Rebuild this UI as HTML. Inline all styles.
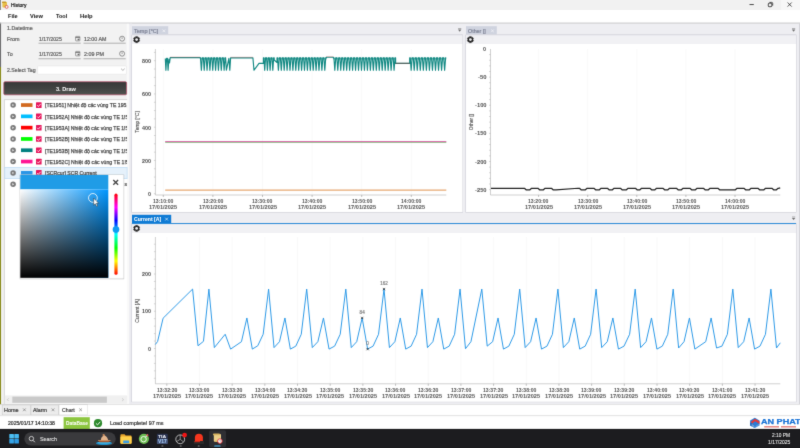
<!DOCTYPE html>
<html><head><meta charset="utf-8"><title>History</title>
<style>
*{box-sizing:border-box}
html,body{margin:0;padding:0;width:800px;height:448px;overflow:hidden;background:#fff;font-family:"Liberation Sans",sans-serif;}
#root{position:relative;width:800px;height:448px;overflow:hidden;background:#eeeef2;}
.a{position:absolute}
.t{position:absolute;white-space:nowrap;line-height:8px;height:8px;color:#333;transform-origin:0 0;-webkit-text-stroke:0.22px currentColor}
.t.v{transform:translate(-50%,-50%) rotate(-90deg);transform-origin:50% 50%}
svg{position:absolute;left:0;top:0;overflow:visible;pointer-events:none}
</style></head><body><svg width="0" height="0"><defs><filter id="soft" x="0" y="0" width="100%" height="100%" color-interpolation-filters="sRGB"><feConvolveMatrix order="3" kernelMatrix="1 8 1 8 64 8 1 8 1" divisor="100" edgeMode="duplicate" preserveAlpha="true"/></filter></defs></svg><div id="root" style="filter:url(#soft)">
<svg width="800" height="448" viewBox="0 0 800 448"><defs><linearGradient id="gb" x1="0" y1="0" x2="0" y2="1"><stop offset="0" stop-color="#383838"/><stop offset="0.5" stop-color="#414241"/><stop offset="1" stop-color="#505450"/></linearGradient><linearGradient id="gh" x1="0" y1="0" x2="1" y2="0"><stop offset="0" stop-color="#fff"/><stop offset="1" stop-color="#0096ff"/></linearGradient><linearGradient id="gv" x1="0" y1="0" x2="0" y2="1"><stop offset="0" stop-color="#000" stop-opacity="0"/><stop offset="1" stop-color="#000"/></linearGradient><linearGradient id="hue" x1="0" y1="0" x2="0" y2="1"><stop offset="0" stop-color="#f00"/><stop offset="0.17" stop-color="#f0f"/><stop offset="0.33" stop-color="#00f"/><stop offset="0.5" stop-color="#0ff"/><stop offset="0.67" stop-color="#0f0"/><stop offset="0.83" stop-color="#ff0"/><stop offset="1" stop-color="#f00"/></linearGradient></defs>
<rect x="0.00" y="0.00" width="800.00" height="448.00" fill="#eeeef2" />
<rect x="0.00" y="0.00" width="800.00" height="10.20" fill="#f1f1f1" />
<rect x="781.00" y="0.00" width="19.00" height="10.20" fill="#f7f7f7" />
<rect x="0.00" y="0.00" width="1.00" height="23.60" fill="#8e8e8e" />
<rect x="2.4" y="2" width="4.6" height="5.6" rx="0.8" fill="#e8c24a"/><rect x="2" y="1.6" width="4.2" height="1.4" rx="0.6" fill="#c99a2a"/><circle cx="6.6" cy="6.9" r="1.5" fill="#f4f4f4" stroke="#d9363e" stroke-width="0.7"/><path d="M749.5 4.55h4.3" stroke="#111" stroke-width="0.75" fill="none"/><rect x="768.3" y="3.2" width="3.5" height="3.5" rx="0.8" stroke="#111" stroke-width="0.75" fill="none"/><path d="M769.5 2.4h2.2a1.0 1.0 0 0 1 1.0 1.0v2.2" stroke="#111" stroke-width="0.7" fill="none"/><path d="M787.6 2.5l4.1 4.1m0-4.1l-4.1 4.1" stroke="#111" stroke-width="0.7" fill="none"/>
<rect x="0.00" y="10.00" width="800.00" height="12.60" fill="#ffffff" />
<rect x="0.00" y="22.60" width="800.00" height="1.00" fill="#cdcdcd" />
<rect x="0.00" y="23.60" width="1.30" height="43.40" fill="#6e6e6e" />
<rect x="0.00" y="67.00" width="1.30" height="362.00" fill="#8a8c1e" />
<rect x="1.30" y="23.60" width="0.90" height="405.00" fill="#fafafa" />
<rect x="2.20" y="23.60" width="124.40" height="381.00" fill="#f2f2f2" />
<rect x="126.60" y="23.60" width="2.80" height="381.00" fill="#f9f9f9" />
<rect x="129.40" y="23.60" width="2.60" height="381.00" fill="#ebebf0" />
<rect x="38.50" y="42.70" width="42.20" height="0.95" fill="#ababab" />
<rect x="83.50" y="42.70" width="42.20" height="0.95" fill="#ababab" />
<rect x="38.50" y="58.30" width="42.20" height="0.95" fill="#ababab" />
<rect x="83.50" y="58.30" width="42.20" height="0.95" fill="#ababab" />
<rect x="37.60" y="66.00" width="88.80" height="8.20" fill="#ffffff" stroke="#e0e0e0" stroke-width="0.5" rx="0.8"/>
<rect x="75.6" y="36.40" width="4.3" height="4.5" rx="0.5" fill="none" stroke="#666" stroke-width="0.6"/><path d="M75.6 37.50h4.3" stroke="#666" stroke-width="0.8"/><rect x="77.6" y="38.70" width="1.7" height="1.6" fill="#666"/><circle cx="122.1" cy="38.70" r="2.5" fill="none" stroke="#5e5e5e" stroke-width="0.65"/><path d="M122.1 37.30v1.7" stroke="#5e5e5e" stroke-width="0.6" fill="none"/>
<rect x="75.6" y="51.40" width="4.3" height="4.5" rx="0.5" fill="none" stroke="#666" stroke-width="0.6"/><path d="M75.6 52.50h4.3" stroke="#666" stroke-width="0.8"/><rect x="77.6" y="53.70" width="1.7" height="1.6" fill="#666"/><circle cx="122.1" cy="53.70" r="2.5" fill="none" stroke="#5e5e5e" stroke-width="0.65"/><path d="M122.1 52.30v1.7" stroke="#5e5e5e" stroke-width="0.6" fill="none"/>
<path d="M121.1 68.7l1.8 1.7l1.8-1.7" stroke="#777" stroke-width="0.6" fill="none"/>
<rect x="3.80" y="81.70" width="122.80" height="13.10" fill="url(#gb)" stroke="#b8506a" stroke-width="0.7" rx="1.2"/>
<rect x="4.20" y="99.40" width="122.90" height="304.60" fill="#ffffff" />
<path d="M4.4 404V99.6H127.1" stroke="#bdbdbd" stroke-width="0.6" fill="none"/>
<rect x="4.80" y="167.30" width="122.30" height="11.40" fill="#e5f1fb" stroke="#b5d8f3" stroke-width="0.6"/>
<circle cx="13.1" cy="105.10" r="2.75" fill="#7a7a7a"/><path d="M12.3 103.90l1.9 1.2l-1.9 1.2z" fill="#ececec"/>
<rect x="21.00" y="103.20" width="11.50" height="3.70" fill="#d2691e" />
<rect x="36.00" y="102.30" width="5.60" height="5.60" fill="#e6175c" rx="0.5"/>
<path d="M37.2 105.20l1.2 1.3l2.2-2.5" stroke="#fff" stroke-width="0.8" fill="none"/>
<circle cx="13.1" cy="116.40" r="2.75" fill="#7a7a7a"/><path d="M12.3 115.20l1.9 1.2l-1.9 1.2z" fill="#ececec"/>
<rect x="21.00" y="114.50" width="11.50" height="3.70" fill="#00bfff" />
<rect x="36.00" y="113.60" width="5.60" height="5.60" fill="#e6175c" rx="0.5"/>
<path d="M37.2 116.50l1.2 1.3l2.2-2.5" stroke="#fff" stroke-width="0.8" fill="none"/>
<circle cx="13.1" cy="127.70" r="2.75" fill="#7a7a7a"/><path d="M12.3 126.50l1.9 1.2l-1.9 1.2z" fill="#ececec"/>
<rect x="21.00" y="125.80" width="11.50" height="3.70" fill="#ff0000" />
<rect x="36.00" y="124.90" width="5.60" height="5.60" fill="#e6175c" rx="0.5"/>
<path d="M37.2 127.80l1.2 1.3l2.2-2.5" stroke="#fff" stroke-width="0.8" fill="none"/>
<circle cx="13.1" cy="139.00" r="2.75" fill="#7a7a7a"/><path d="M12.3 137.80l1.9 1.2l-1.9 1.2z" fill="#ececec"/>
<rect x="21.00" y="137.10" width="11.50" height="3.70" fill="#00ff00" />
<rect x="36.00" y="136.20" width="5.60" height="5.60" fill="#e6175c" rx="0.5"/>
<path d="M37.2 139.10l1.2 1.3l2.2-2.5" stroke="#fff" stroke-width="0.8" fill="none"/>
<circle cx="13.1" cy="150.30" r="2.75" fill="#7a7a7a"/><path d="M12.3 149.10l1.9 1.2l-1.9 1.2z" fill="#ececec"/>
<rect x="21.00" y="148.40" width="11.50" height="3.70" fill="#008080" />
<rect x="36.00" y="147.50" width="5.60" height="5.60" fill="#e6175c" rx="0.5"/>
<path d="M37.2 150.40l1.2 1.3l2.2-2.5" stroke="#fff" stroke-width="0.8" fill="none"/>
<circle cx="13.1" cy="161.60" r="2.75" fill="#7a7a7a"/><path d="M12.3 160.40l1.9 1.2l-1.9 1.2z" fill="#ececec"/>
<rect x="21.00" y="159.70" width="11.50" height="3.70" fill="#ff1493" />
<rect x="36.00" y="158.80" width="5.60" height="5.60" fill="#e6175c" rx="0.5"/>
<path d="M37.2 161.70l1.2 1.3l2.2-2.5" stroke="#fff" stroke-width="0.8" fill="none"/>
<circle cx="13.1" cy="172.90" r="2.75" fill="#7a7a7a"/><path d="M12.3 171.70l1.9 1.2l-1.9 1.2z" fill="#ececec"/>
<rect x="21.00" y="171.00" width="11.50" height="3.70" fill="#2b96e6" />
<rect x="36.00" y="170.10" width="5.60" height="5.60" fill="#e6175c" rx="0.5"/>
<path d="M37.2 173.00l1.2 1.3l2.2-2.5" stroke="#fff" stroke-width="0.8" fill="none"/>
<circle cx="13.1" cy="184.20" r="2.75" fill="#7a7a7a"/><path d="M12.3 183.00l1.9 1.2l-1.9 1.2z" fill="#ececec"/>
<rect x="4.80" y="395.40" width="122.30" height="8.40" fill="#f0f0f0" />
<rect x="12.30" y="396.60" width="94.60" height="6.20" fill="#c9c9c9" />
<path d="M8.6 398.4l-1.3 1.3l1.3 1.3M122.2 398.4l1.3 1.3l-1.3 1.3" stroke="#b0b0b0" stroke-width="0.6" fill="none"/>
<rect x="131.70" y="34.90" width="331.00" height="177.40" fill="none" stroke="#cfcfd8" stroke-width="0.6"/>
<rect x="465.70" y="34.90" width="330.50" height="177.40" fill="none" stroke="#cfcfd8" stroke-width="0.6"/>
<rect x="131.70" y="223.50" width="664.50" height="178.40" fill="none" stroke="#cfcfd8" stroke-width="0.6"/>
<rect x="132.00" y="35.20" width="330.40" height="9.10" fill="#f1f1f4" />
<rect x="132.00" y="26.20" width="36.20" height="8.30" fill="#cfd3df" />
<rect x="132.00" y="34.50" width="330.40" height="0.70" fill="#d6d6de" />
<path d="M162.60 29.50l2.6 2.6m0-2.6l-2.6 2.6" stroke="#f4f4f8" stroke-width="0.75" fill="none"/>
<rect x="132.00" y="44.00" width="330.40" height="168.00" fill="#ffffff" />
<rect x="466.00" y="35.20" width="330.00" height="9.10" fill="#f1f1f4" />
<rect x="466.00" y="26.20" width="30.80" height="8.30" fill="#cfd3df" />
<rect x="466.00" y="34.50" width="330.00" height="0.70" fill="#d6d6de" />
<path d="M491.20 29.50l2.6 2.6m0-2.6l-2.6 2.6" stroke="#f4f4f8" stroke-width="0.75" fill="none"/>
<rect x="466.00" y="44.00" width="330.00" height="168.00" fill="#ffffff" />
<rect x="132.00" y="223.80" width="664.00" height="9.10" fill="#f1f1f4" />
<rect x="132.00" y="214.80" width="39.20" height="8.70" fill="#0f7bd5" />
<rect x="132.00" y="223.05" width="664.00" height="1.00" fill="#2b8ad8" />
<path d="M165.20 217.70l2.8 2.8m0-2.8l-2.8 2.8" stroke="#fff" stroke-width="0.6" fill="none"/>
<rect x="132.00" y="233.00" width="664.00" height="168.60" fill="#ffffff" />
<path d="M135.62 36.45L137.58 36.45L137.80 37.41L137.90 37.47L138.84 37.18L139.82 38.87L139.10 39.54L139.10 39.66L139.82 40.33L138.84 42.02L137.90 41.73L137.80 41.79L137.58 42.75L135.62 42.75L135.40 41.79L135.30 41.73L134.36 42.02L133.38 40.33L134.10 39.66L134.10 39.54L133.38 38.87L134.36 37.18L135.30 37.47L135.40 37.41Z" fill="#222" stroke="#222" stroke-width="0.3" stroke-linejoin="round"/><circle cx="136.6" cy="39.6" r="1.4" fill="#f0f0f3"/>
<path d="M469.42 36.45L471.38 36.45L471.60 37.41L471.70 37.47L472.64 37.18L473.62 38.87L472.90 39.54L472.90 39.66L473.62 40.33L472.64 42.02L471.70 41.73L471.60 41.79L471.38 42.75L469.42 42.75L469.20 41.79L469.10 41.73L468.16 42.02L467.18 40.33L467.90 39.66L467.90 39.54L467.18 38.87L468.16 37.18L469.10 37.47L469.20 37.41Z" fill="#222" stroke="#222" stroke-width="0.3" stroke-linejoin="round"/><circle cx="470.4" cy="39.6" r="1.4" fill="#f0f0f3"/>
<path d="M135.62 225.25L137.58 225.25L137.80 226.21L137.90 226.27L138.84 225.98L139.82 227.67L139.10 228.34L139.10 228.46L139.82 229.13L138.84 230.82L137.90 230.53L137.80 230.59L137.58 231.55L135.62 231.55L135.40 230.59L135.30 230.53L134.36 230.82L133.38 229.13L134.10 228.46L134.10 228.34L133.38 227.67L134.36 225.98L135.30 226.27L135.40 226.21Z" fill="#222" stroke="#222" stroke-width="0.3" stroke-linejoin="round"/><circle cx="136.6" cy="228.4" r="1.4" fill="#f0f0f3"/>
<path d="M458.10 28.60h3.2" stroke="#777" stroke-width="0.6"/><path d="M458.00 29.60h3.4l-1.7 2.1z" fill="#707070"/>
<path d="M792.00 28.60h3.2" stroke="#777" stroke-width="0.6"/><path d="M791.90 29.60h3.4l-1.7 2.1z" fill="#707070"/>
<path d="M792.00 217.00h3.2" stroke="#777" stroke-width="0.6"/><path d="M791.90 218.00h3.4l-1.7 2.1z" fill="#707070"/>
<path d="M163.30 49V195.0" stroke="#ececec" stroke-width="0.32"/>
<path d="M212.90 49V195.0" stroke="#ececec" stroke-width="0.32"/>
<path d="M262.50 49V195.0" stroke="#ececec" stroke-width="0.32"/>
<path d="M312.10 49V195.0" stroke="#ececec" stroke-width="0.32"/>
<path d="M361.70 49V195.0" stroke="#ececec" stroke-width="0.32"/>
<path d="M411.30 49V195.0" stroke="#ececec" stroke-width="0.32"/>
<path d="M155.4 49V195.0H446.3" stroke="#a8a8a8" stroke-width="0.55" fill="none"/>
<path d="M153.90 193.70h1.5" stroke="#a8a8a8" stroke-width="0.45"/>
<path d="M153.90 185.39h1.5" stroke="#a8a8a8" stroke-width="0.45"/>
<path d="M153.90 177.07h1.5" stroke="#a8a8a8" stroke-width="0.45"/>
<path d="M153.90 168.76h1.5" stroke="#a8a8a8" stroke-width="0.45"/>
<path d="M153.90 160.45h1.5" stroke="#a8a8a8" stroke-width="0.45"/>
<path d="M153.90 152.14h1.5" stroke="#a8a8a8" stroke-width="0.45"/>
<path d="M153.90 143.82h1.5" stroke="#a8a8a8" stroke-width="0.45"/>
<path d="M153.90 135.51h1.5" stroke="#a8a8a8" stroke-width="0.45"/>
<path d="M153.90 127.20h1.5" stroke="#a8a8a8" stroke-width="0.45"/>
<path d="M153.90 118.89h1.5" stroke="#a8a8a8" stroke-width="0.45"/>
<path d="M153.90 110.57h1.5" stroke="#a8a8a8" stroke-width="0.45"/>
<path d="M153.90 102.26h1.5" stroke="#a8a8a8" stroke-width="0.45"/>
<path d="M153.90 93.95h1.5" stroke="#a8a8a8" stroke-width="0.45"/>
<path d="M153.90 85.64h1.5" stroke="#a8a8a8" stroke-width="0.45"/>
<path d="M153.90 77.32h1.5" stroke="#a8a8a8" stroke-width="0.45"/>
<path d="M153.90 69.01h1.5" stroke="#a8a8a8" stroke-width="0.45"/>
<path d="M153.90 60.70h1.5" stroke="#a8a8a8" stroke-width="0.45"/>
<path d="M153.90 52.39h1.5" stroke="#a8a8a8" stroke-width="0.45"/>
<path d="M163.30 195.00v2.0" stroke="#999" stroke-width="0.6"/>
<path d="M212.90 195.00v2.0" stroke="#999" stroke-width="0.6"/>
<path d="M262.50 195.00v2.0" stroke="#999" stroke-width="0.6"/>
<path d="M312.10 195.00v2.0" stroke="#999" stroke-width="0.6"/>
<path d="M361.70 195.00v2.0" stroke="#999" stroke-width="0.6"/>
<path d="M411.30 195.00v2.0" stroke="#999" stroke-width="0.6"/>
<path d="M165.2 190.1H446.3" stroke="#e6a872" stroke-width="1.3"/>
<path d="M165.2 142.3H446.3" stroke="#5fae5f" stroke-width="0.8"/>
<path d="M165.2 141.6H446.3" stroke="#d9509f" stroke-width="0.9"/>
<polyline points="165.30,58.50 165.90,70.30 166.60,58.20 167.40,58.20 168.10,70.30 168.90,59.00 169.50,63.00 170.20,57.60 170.20,57.60 200.00,57.60 200.00,57.90 200.51,57.90 201.37,70.30 202.28,57.90 202.84,57.90 203.36,57.90 204.21,70.30 205.12,57.90 205.69,57.90 206.20,57.90 207.05,70.30 207.96,57.90 208.53,57.90 209.05,57.90 209.90,70.30 210.81,57.90 211.38,57.90 211.89,57.90 212.74,70.30 213.65,57.90 214.22,57.90 214.73,57.90 215.59,70.30 216.50,57.90 217.07,57.90 217.58,57.90 218.43,70.30 219.34,57.90 219.91,57.90 220.42,57.90 221.28,70.30 222.19,57.90 222.76,57.90 223.27,57.90 224.12,70.30 225.03,57.90 225.60,57.90 226.40,70.20 228.90,58.40 229.80,70.20 230.60,57.90 252.90,57.80 254.00,70.20 259.00,63.40 263.40,63.40 263.40,57.90 263.89,57.90 264.70,70.30 265.56,57.90 266.10,57.90 266.59,57.90 267.40,70.30 268.26,57.90 268.80,57.90 269.29,57.90 270.10,70.30 270.96,57.90 271.50,57.90 271.99,57.90 272.80,70.30 273.66,57.90 274.20,57.90 274.20,60.00 277.00,62.50 277.00,57.90 277.52,57.90 278.39,70.30 279.32,57.90 279.90,57.90 280.42,57.90 281.29,70.30 282.22,57.90 282.80,57.90 283.32,57.90 284.19,70.30 285.12,57.90 285.70,57.90 286.22,57.90 287.09,70.30 288.02,57.90 288.60,57.90 289.12,57.90 289.99,70.30 290.92,57.90 291.50,57.90 292.02,57.90 292.89,70.30 293.82,57.90 294.40,57.90 294.92,57.90 295.79,70.30 296.72,57.90 297.30,57.90 297.82,57.90 298.69,70.30 299.62,57.90 300.20,57.90 300.72,57.90 301.59,70.30 302.52,57.90 303.10,57.90 303.62,57.90 304.49,70.30 305.42,57.90 306.00,57.90 306.52,57.90 307.39,70.30 308.32,57.90 308.90,57.90 309.42,57.90 310.29,70.30 311.22,57.90 311.80,57.90 312.32,57.90 313.19,70.30 314.12,57.90 314.70,57.90 315.22,57.90 316.09,70.30 317.02,57.90 317.60,57.90 318.12,57.90 318.99,70.30 319.92,57.90 320.50,57.90 321.02,57.90 321.89,70.30 322.82,57.90 323.40,57.90 323.92,57.90 324.79,70.30 325.72,57.90 326.30,57.90 326.30,57.20 333.40,57.20 333.40,57.90 333.93,57.90 334.82,70.30 335.77,57.90 336.36,57.90 336.90,57.90 337.78,70.30 338.73,57.90 339.32,57.90 339.86,57.90 340.75,70.30 341.69,57.90 342.29,57.90 342.82,57.90 343.71,70.30 344.66,57.90 345.25,57.90 345.78,57.90 346.67,70.30 347.62,57.90 348.21,57.90 348.74,57.90 349.63,70.30 350.58,57.90 351.17,57.90 351.70,57.90 352.59,70.30 353.54,57.90 354.13,57.90 354.67,57.90 355.56,70.30 356.50,57.90 357.10,57.90 357.63,57.90 358.52,70.30 359.46,57.90 360.06,57.90 360.59,57.90 361.48,70.30 362.43,57.90 363.02,57.90 363.55,57.90 364.44,70.30 365.39,57.90 365.98,57.90 366.51,57.90 367.40,70.30 368.35,57.90 368.94,57.90 369.48,57.90 370.36,70.30 371.31,57.90 371.90,57.90 372.44,57.90 373.33,70.30 374.27,57.90 374.87,57.90 375.40,57.90 376.29,70.30 377.24,57.90 377.83,57.90 378.36,57.90 379.25,70.30 380.20,57.90 380.79,57.90 381.32,57.90 382.21,70.30 383.16,57.90 383.75,57.90 384.29,57.90 385.17,70.30 386.12,57.90 386.71,57.90 387.25,57.90 388.14,70.30 389.08,57.90 389.68,57.90 390.21,57.90 391.10,70.30 392.05,57.90 392.64,57.90 393.17,57.90 394.06,70.30 395.01,57.90 395.60,57.90 395.60,63.40 409.70,63.40 409.70,57.90 410.25,57.90 411.16,70.30 412.13,57.90 412.74,57.90 413.29,57.90 414.20,70.30 415.18,57.90 415.78,57.90 416.33,57.90 417.24,70.30 418.22,57.90 418.82,57.90 419.37,57.90 420.28,70.30 421.26,57.90 421.87,57.90 422.41,57.90 423.33,70.30 424.30,57.90 424.91,57.90 425.46,57.90 426.37,70.30 427.34,57.90 427.95,57.90 428.50,57.90 429.41,70.30 430.38,57.90 430.99,57.90 431.54,57.90 432.45,70.30 433.43,57.90 434.03,57.90 434.58,57.90 435.49,70.30 436.47,57.90 437.07,57.90 437.62,57.90 438.53,70.30 439.51,57.90 440.12,57.90 440.66,57.90 441.58,70.30 442.55,57.90 443.16,57.90 443.71,57.90 444.62,70.30 445.59,57.90 446.20,57.90" fill="none" stroke="#148a84" stroke-width="1.15" stroke-linejoin="round"/>
<path d="M170.3 57.1H200M230.6 57.25H252.9M326.3 56.7H333.4" stroke="#e06060" stroke-width="0.35" fill="none"/>
<path d="M200 58.6H225.6M263.4 58.6H274.2M277 58.6H326.3M333.4 58.6H395.6M409.7 58.6H446.2" stroke="#148a84" stroke-width="1.6" stroke-opacity="0.55" fill="none"/>
<path d="M395.6 63.3H409.7" stroke="#8a4a4a" stroke-width="0.7" fill="none"/>
<path d="M538.60 49V195.0" stroke="#ececec" stroke-width="0.32"/>
<path d="M587.70 49V195.0" stroke="#ececec" stroke-width="0.32"/>
<path d="M636.80 49V195.0" stroke="#ececec" stroke-width="0.32"/>
<path d="M685.90 49V195.0" stroke="#ececec" stroke-width="0.32"/>
<path d="M735.00 49V195.0" stroke="#ececec" stroke-width="0.32"/>
<path d="M490.5 49V195.0H780.3" stroke="#a8a8a8" stroke-width="0.55" fill="none"/>
<path d="M489.00 54.62h1.5" stroke="#a8a8a8" stroke-width="0.45"/>
<path d="M489.00 60.25h1.5" stroke="#a8a8a8" stroke-width="0.45"/>
<path d="M489.00 65.88h1.5" stroke="#a8a8a8" stroke-width="0.45"/>
<path d="M489.00 71.50h1.5" stroke="#a8a8a8" stroke-width="0.45"/>
<path d="M489.00 77.12h1.5" stroke="#a8a8a8" stroke-width="0.45"/>
<path d="M489.00 82.75h1.5" stroke="#a8a8a8" stroke-width="0.45"/>
<path d="M489.00 88.38h1.5" stroke="#a8a8a8" stroke-width="0.45"/>
<path d="M489.00 94.00h1.5" stroke="#a8a8a8" stroke-width="0.45"/>
<path d="M489.00 99.62h1.5" stroke="#a8a8a8" stroke-width="0.45"/>
<path d="M489.00 105.25h1.5" stroke="#a8a8a8" stroke-width="0.45"/>
<path d="M489.00 110.88h1.5" stroke="#a8a8a8" stroke-width="0.45"/>
<path d="M489.00 116.50h1.5" stroke="#a8a8a8" stroke-width="0.45"/>
<path d="M489.00 122.12h1.5" stroke="#a8a8a8" stroke-width="0.45"/>
<path d="M489.00 127.75h1.5" stroke="#a8a8a8" stroke-width="0.45"/>
<path d="M489.00 133.38h1.5" stroke="#a8a8a8" stroke-width="0.45"/>
<path d="M489.00 139.00h1.5" stroke="#a8a8a8" stroke-width="0.45"/>
<path d="M489.00 144.62h1.5" stroke="#a8a8a8" stroke-width="0.45"/>
<path d="M489.00 150.25h1.5" stroke="#a8a8a8" stroke-width="0.45"/>
<path d="M489.00 155.88h1.5" stroke="#a8a8a8" stroke-width="0.45"/>
<path d="M489.00 161.50h1.5" stroke="#a8a8a8" stroke-width="0.45"/>
<path d="M489.00 167.12h1.5" stroke="#a8a8a8" stroke-width="0.45"/>
<path d="M489.00 172.75h1.5" stroke="#a8a8a8" stroke-width="0.45"/>
<path d="M489.00 178.38h1.5" stroke="#a8a8a8" stroke-width="0.45"/>
<path d="M489.00 184.00h1.5" stroke="#a8a8a8" stroke-width="0.45"/>
<path d="M489.00 189.62h1.5" stroke="#a8a8a8" stroke-width="0.45"/>
<path d="M538.60 195.00v2.0" stroke="#999" stroke-width="0.6"/>
<path d="M587.70 195.00v2.0" stroke="#999" stroke-width="0.6"/>
<path d="M636.80 195.00v2.0" stroke="#999" stroke-width="0.6"/>
<path d="M685.90 195.00v2.0" stroke="#999" stroke-width="0.6"/>
<path d="M735.00 195.00v2.0" stroke="#999" stroke-width="0.6"/>
<polyline points="491.00,188.45 524.50,188.45 524.70,188.45 526.10,189.80 529.90,189.80 531.30,188.45 538.20,188.45 539.60,189.80 543.40,189.80 544.80,188.45 551.70,188.45 553.10,189.80 556.00,189.80 578.00,188.25 579.70,188.45 581.10,189.80 585.40,189.80 586.80,188.45 594.20,188.45 595.60,189.80 599.40,189.80 600.80,188.45 607.70,188.45 609.10,189.80 612.40,189.80 613.80,188.45 620.70,188.45 622.10,189.80 626.40,189.80 627.80,188.45 635.70,188.45 637.10,189.80 639.90,189.80 641.30,188.45 650.20,188.45 651.60,189.80 654.90,189.80 656.30,188.45 663.20,188.45 664.60,189.80 667.90,189.80 669.30,188.45 676.70,188.45 678.10,189.80 681.40,189.80 682.80,188.45 690.20,188.45 691.60,189.80 695.40,189.80 696.80,188.45 703.70,188.45 705.10,189.80 708.40,189.80 709.80,188.45 718.20,188.45 719.60,189.80 735.40,189.80 736.80,188.45 744.20,188.45 745.60,189.80 749.40,189.80 750.80,188.45 758.20,188.45 759.60,189.80 763.90,189.80 765.30,188.45 772.20,188.45 773.60,189.80 776.40,189.80 777.80,188.45 778.50,188.45 780.20,187.95" fill="none" stroke="#222" stroke-width="1.2" stroke-linejoin="round"/>
<path d="M166.80 237V383.8" stroke="#ececec" stroke-width="0.32"/>
<path d="M199.48 237V383.8" stroke="#ececec" stroke-width="0.32"/>
<path d="M232.16 237V383.8" stroke="#ececec" stroke-width="0.32"/>
<path d="M264.84 237V383.8" stroke="#ececec" stroke-width="0.32"/>
<path d="M297.52 237V383.8" stroke="#ececec" stroke-width="0.32"/>
<path d="M330.20 237V383.8" stroke="#ececec" stroke-width="0.32"/>
<path d="M362.88 237V383.8" stroke="#ececec" stroke-width="0.32"/>
<path d="M395.56 237V383.8" stroke="#ececec" stroke-width="0.32"/>
<path d="M428.24 237V383.8" stroke="#ececec" stroke-width="0.32"/>
<path d="M460.92 237V383.8" stroke="#ececec" stroke-width="0.32"/>
<path d="M493.60 237V383.8" stroke="#ececec" stroke-width="0.32"/>
<path d="M526.28 237V383.8" stroke="#ececec" stroke-width="0.32"/>
<path d="M558.96 237V383.8" stroke="#ececec" stroke-width="0.32"/>
<path d="M591.64 237V383.8" stroke="#ececec" stroke-width="0.32"/>
<path d="M624.32 237V383.8" stroke="#ececec" stroke-width="0.32"/>
<path d="M657.00 237V383.8" stroke="#ececec" stroke-width="0.32"/>
<path d="M689.68 237V383.8" stroke="#ececec" stroke-width="0.32"/>
<path d="M722.36 237V383.8" stroke="#ececec" stroke-width="0.32"/>
<path d="M755.04 237V383.8" stroke="#ececec" stroke-width="0.32"/>
<path d="M155.4 237V383.8H780.3" stroke="#a8a8a8" stroke-width="0.55" fill="none"/>
<path d="M153.90 378.30h1.5" stroke="#a8a8a8" stroke-width="0.45"/>
<path d="M153.90 370.85h1.5" stroke="#a8a8a8" stroke-width="0.45"/>
<path d="M153.90 363.40h1.5" stroke="#a8a8a8" stroke-width="0.45"/>
<path d="M153.90 355.95h1.5" stroke="#a8a8a8" stroke-width="0.45"/>
<path d="M153.90 348.50h1.5" stroke="#a8a8a8" stroke-width="0.45"/>
<path d="M153.90 341.05h1.5" stroke="#a8a8a8" stroke-width="0.45"/>
<path d="M153.90 333.60h1.5" stroke="#a8a8a8" stroke-width="0.45"/>
<path d="M153.90 326.15h1.5" stroke="#a8a8a8" stroke-width="0.45"/>
<path d="M153.90 318.70h1.5" stroke="#a8a8a8" stroke-width="0.45"/>
<path d="M153.90 311.25h1.5" stroke="#a8a8a8" stroke-width="0.45"/>
<path d="M153.90 303.80h1.5" stroke="#a8a8a8" stroke-width="0.45"/>
<path d="M153.90 296.35h1.5" stroke="#a8a8a8" stroke-width="0.45"/>
<path d="M153.90 288.90h1.5" stroke="#a8a8a8" stroke-width="0.45"/>
<path d="M153.90 281.45h1.5" stroke="#a8a8a8" stroke-width="0.45"/>
<path d="M153.90 274.00h1.5" stroke="#a8a8a8" stroke-width="0.45"/>
<path d="M153.90 266.55h1.5" stroke="#a8a8a8" stroke-width="0.45"/>
<path d="M153.90 259.10h1.5" stroke="#a8a8a8" stroke-width="0.45"/>
<path d="M153.90 251.65h1.5" stroke="#a8a8a8" stroke-width="0.45"/>
<path d="M153.90 244.20h1.5" stroke="#a8a8a8" stroke-width="0.45"/>
<path d="M166.80 383.80v2.0" stroke="#999" stroke-width="0.6"/>
<path d="M199.48 383.80v2.0" stroke="#999" stroke-width="0.6"/>
<path d="M232.16 383.80v2.0" stroke="#999" stroke-width="0.6"/>
<path d="M264.84 383.80v2.0" stroke="#999" stroke-width="0.6"/>
<path d="M297.52 383.80v2.0" stroke="#999" stroke-width="0.6"/>
<path d="M330.20 383.80v2.0" stroke="#999" stroke-width="0.6"/>
<path d="M362.88 383.80v2.0" stroke="#999" stroke-width="0.6"/>
<path d="M395.56 383.80v2.0" stroke="#999" stroke-width="0.6"/>
<path d="M428.24 383.80v2.0" stroke="#999" stroke-width="0.6"/>
<path d="M460.92 383.80v2.0" stroke="#999" stroke-width="0.6"/>
<path d="M493.60 383.80v2.0" stroke="#999" stroke-width="0.6"/>
<path d="M526.28 383.80v2.0" stroke="#999" stroke-width="0.6"/>
<path d="M558.96 383.80v2.0" stroke="#999" stroke-width="0.6"/>
<path d="M591.64 383.80v2.0" stroke="#999" stroke-width="0.6"/>
<path d="M624.32 383.80v2.0" stroke="#999" stroke-width="0.6"/>
<path d="M657.00 383.80v2.0" stroke="#999" stroke-width="0.6"/>
<path d="M689.68 383.80v2.0" stroke="#999" stroke-width="0.6"/>
<path d="M722.36 383.80v2.0" stroke="#999" stroke-width="0.6"/>
<path d="M755.04 383.80v2.0" stroke="#999" stroke-width="0.6"/>
<polyline points="155.30,344.50 157.60,341.50 163.10,318.20 192.60,289.08 198.03,345.77 203.47,341.32 208.90,289.08 214.33,347.62 225.18,334.28 230.61,349.10 241.46,341.69 246.89,317.98 252.32,349.10 257.75,345.77 263.17,334.28 268.60,289.08 274.04,347.62 279.49,341.69 284.93,317.98 290.37,349.10 295.81,346.14 301.26,334.28 306.70,289.08 312.29,347.62 317.87,341.69 323.46,317.98 329.04,349.10 334.63,346.14 340.21,334.28 345.80,289.08 351.26,347.62 356.71,341.69 362.17,317.98 367.63,349.10 373.09,346.14 378.54,334.28 384.00,289.08 389.43,347.62 394.86,341.69 400.29,317.98 405.71,349.10 411.14,346.14 416.57,334.28 422.00,289.08 427.44,347.62 432.87,341.69 438.31,317.98 443.74,349.10 449.18,346.14 454.61,334.28 460.05,289.08 465.49,348.73 470.93,341.69 481.80,289.08 487.21,346.14 492.63,341.69 498.04,317.98 503.46,349.10 508.87,346.14 514.29,334.28 519.70,289.08 525.16,347.62 530.61,341.69 536.07,317.98 541.53,349.10 546.99,346.14 552.44,334.28 557.90,289.08 563.36,347.62 568.81,341.69 574.27,317.98 579.73,349.10 585.19,346.14 590.64,334.28 596.10,289.08 601.69,347.62 607.27,341.69 612.86,317.98 618.44,349.10 624.03,346.14 629.61,334.28 635.20,289.08 640.63,347.62 646.06,341.69 651.49,317.98 656.91,349.10 662.34,346.14 667.77,334.28 673.20,289.08 678.62,347.99 684.04,341.69 689.45,317.98 694.87,349.10 705.71,341.69 711.13,317.98 716.55,347.99 721.96,346.14 727.38,334.28 732.80,289.08 738.24,347.62 743.69,341.69 749.13,317.98 754.57,349.10 760.01,346.14 765.46,334.28 770.90,289.08 776.50,347.99 780.30,342.80" fill="none" stroke="#2f9be8" stroke-width="1.0" stroke-linejoin="miter"/>
<path d="M361.02 316.83l2.3 2.3m0-2.3l-2.3 2.3" stroke="#222" stroke-width="0.7"/>
<path d="M366.48 347.95l2.3 2.3m0-2.3l-2.3 2.3" stroke="#222" stroke-width="0.7"/>
<path d="M382.85 287.93l2.3 2.3m0-2.3l-2.3 2.3" stroke="#222" stroke-width="0.7"/>
<rect x="19.30" y="174.10" width="105.20" height="105.60" fill="#000" opacity="0.05" rx="1.2"/>
<rect x="19.60" y="174.40" width="104.60" height="104.90" fill="#000" opacity="0.09" rx="0.8"/>
<rect x="19.90" y="174.60" width="104.00" height="104.30" fill="#000" opacity="0.12" rx="0.5"/>
<rect x="20.10" y="174.70" width="103.50" height="103.90" fill="#ffffff" />
<rect x="20.30" y="174.90" width="88.00" height="14.50" fill="#209ce6" />
<rect x="20.30" y="189.40" width="88.00" height="88.40" fill="url(#gh)" />
<rect x="20.30" y="189.40" width="88.00" height="88.40" fill="url(#gv)" />
<rect x="114.40" y="193.60" width="3.20" height="81.20" fill="url(#hue)" rx="1.6"/>
<path d="M113.3 180.0l4.8 4.8m0-4.8l-4.8 4.8" stroke="#454545" stroke-width="1.3" fill="none"/><circle cx="116" cy="229.6" r="3.3" fill="#109cf2"/><circle cx="92.9" cy="197.9" r="4.4" fill="none" stroke="#fff" stroke-width="0.8"/><path d="M93.7 198.2v7.0l1.6-1.5l1.3 2.8l1.1-0.5l-1.3-2.7h2.3z" fill="#fff" stroke="#222" stroke-width="0.45" stroke-linejoin="round"/>
<rect x="799.20" y="23.60" width="0.80" height="381.00" fill="#cdcdd2" />
<rect x="0.00" y="404.40" width="800.00" height="10.60" fill="#f0f0f0" />
<rect x="0.00" y="404.00" width="800.00" height="0.70" fill="#d0d0d0" />
<rect x="2.20" y="405.00" width="28.30" height="10.00" fill="#ececec" stroke="#c8c8c8" stroke-width="0.5"/>
<rect x="31.00" y="405.00" width="27.60" height="10.00" fill="#ececec" stroke="#c8c8c8" stroke-width="0.5"/>
<rect x="59.00" y="404.70" width="28.40" height="10.30" fill="#ffffff" stroke="#c8c8c8" stroke-width="0.5"/>
<rect x="87.60" y="404.70" width="712.40" height="10.30" fill="#ffffff" />
<path d="M23.00 408.4l2.8 2.8m0-2.8l-2.8 2.8" stroke="#555" stroke-width="0.5" fill="none"/>
<path d="M51.60 408.4l2.8 2.8m0-2.8l-2.8 2.8" stroke="#555" stroke-width="0.5" fill="none"/>
<path d="M79.20 408.4l2.8 2.8m0-2.8l-2.8 2.8" stroke="#555" stroke-width="0.5" fill="none"/>
<rect x="0.00" y="415.00" width="800.00" height="14.20" fill="#ffffff" />
<rect x="0.00" y="415.00" width="800.00" height="1.20" fill="#e6e6e6" />
<rect x="63.60" y="417.20" width="26.20" height="11.80" fill="#8cc63f" />
<circle cx="98.0" cy="423.2" r="4.1" fill="#2d8a2d"/><path d="M95.9 423.3l1.6 1.6l2.7-3.1" stroke="#fff" stroke-width="0.9" fill="none"/>
<path d="M750.1 420.4l4.7-2.7l4.7 2.7v5.0l-4.7 2.7l-4.7-2.7z" fill="#2a7cd6"/><path d="M750.1 422.6l4.7 2.6v2.9l-4.7-2.7z" fill="#1f66bd"/><path d="M750.6 421.9L754.9 418.7L759.5 421.2V423.9L755.0 421.3L752.4 423.4Z" fill="#e23a3a"/><path d="M751.4 424.4l3.4 1.9M751.4 425.6l3.4 1.9M752.6 424.2v2.6M753.8 424.9v2.6M755.6 426.3l3.4-1.9M755.6 427.4l3.4-1.9" stroke="#cfe3f8" stroke-width="0.3" fill="none"/><rect x="764.2" y="426.1" width="14.8" height="1.4" fill="#d9534f" opacity="0.75"/><rect x="781.0" y="426.1" width="15.0" height="1.4" fill="#d9534f" opacity="0.75"/>
<rect x="0.00" y="428.90" width="800.00" height="19.10" fill="#1c1c1f" />
<rect x="24.30" y="432.20" width="91.50" height="13.20" fill="#3a3a3d" rx="6.6"/>
<rect x="9.3" y="434.0" width="4.6" height="4.6" rx="0.5" fill="#4cc0f4"/><rect x="14.3" y="434.0" width="4.6" height="4.6" rx="0.5" fill="#45b8f0"/><rect x="9.3" y="439.0" width="4.6" height="4.6" rx="0.5" fill="#36a6ea"/><rect x="14.3" y="439.0" width="4.6" height="4.6" rx="0.5" fill="#2f9ce4"/><circle cx="31.4" cy="438.6" r="2.2" fill="none" stroke="#eee" stroke-width="0.75"/><path d="M33.0 440.3l1.8 1.9" stroke="#eee" stroke-width="0.9"/><ellipse cx="104.0" cy="443.2" rx="8.0" ry="1.7" fill="#1f8fc8"/><ellipse cx="104.0" cy="442.8" rx="6.5" ry="1.0" fill="#3fb4e6"/><path d="M98.0 440.2h12.5l-1.8 2.0h-9z" fill="#a8552a"/><path d="M98.0 440.2h12.5v0.6h-12.5z" fill="#d9a070"/><path d="M100.8 440.2c0.2-2.0 1.0-3.6 2.2-4.2c0.2-1.4 1.6-1.6 1.8-0.4c1.6 0.8 3.0 2.6 3.4 4.6z" fill="#e2b48c"/><circle cx="103.6" cy="435.0" r="1.1" fill="#c98a5a"/><path d="M120.4 435.2a0.9 0.9 0 0 1 .9-.9h3.2l1.2 1.2h5.0a0.9 0.9 0 0 1 .9 .9v6.4a0.9 0.9 0 0 1-.9 .9h-9.4a0.9 0.9 0 0 1-.9-.9z" fill="#e8a52c"/><rect x="120.4" y="436.6" width="11.2" height="7.1" rx="0.9" fill="#ffd04a"/><rect x="123.2" y="440.6" width="6.0" height="2.6" rx="0.3" fill="#3a9de6"/><circle cx="143.9" cy="438.8" r="5.1" fill="#6cbd52"/><circle cx="143.6" cy="439.2" r="2.7" fill="none" stroke="#f0f8ec" stroke-width="1.0"/><path d="M145.6 437.0l2.2-2.4" stroke="#f4f4f4" stroke-width="1.1"/><circle cx="147.4" cy="435.2" r="1.0" fill="#e05050"/><rect x="156.9" y="433.8" width="10.9" height="10.2" rx="0.9" fill="#2a3350"/><rect x="156.9" y="439.0" width="10.9" height="5.0" rx="0.9" fill="#47567a"/><circle cx="180.2" cy="439.3" r="4.4" fill="none" stroke="#cfcfcf" stroke-width="0.85"/><path d="M180.2 435.2v4.1l3.1 2.5m-3.1-2.5l-3.3 2.1" stroke="#cfcfcf" stroke-width="0.6" fill="none"/><circle cx="184.6" cy="435.1" r="2.4" fill="#f01414"/><path d="M194.9 441.4v-3.9a4.0 3.8 0 0 1 8.0 0v3.9z" fill="#f4361e"/><rect x="193.8" y="441.0" width="10.2" height="3.0" rx="0.4" fill="#2a2a2a"/><rect x="194.4" y="441.0" width="5.6" height="1.2" fill="#c8281a"/><rect x="209.2" y="430.3" width="16.8" height="16.9" rx="1.7" fill="#2f2f33"/><rect x="213.8" y="433.9" width="7.2" height="7.8" rx="0.9" fill="#ecd08a"/><rect x="213.0" y="433.4" width="7.0" height="1.9" rx="0.9" fill="#d8b460"/><rect x="214.8" y="440.4" width="6.6" height="1.7" rx="0.8" fill="#d8b460"/><circle cx="219.9" cy="441.1" r="2.3" fill="#fbfbfb" stroke="#e0383c" stroke-width="0.9"/><path d="M219.9 439.9v1.3h1.0" stroke="#555" stroke-width="0.4" fill="none"/><rect x="214.2" y="445.5" width="6.4" height="1.1" rx="0.55" fill="#4cc2ff"/><rect x="161.3" y="445.5" width="2.2" height="0.9" rx="0.45" fill="#8e8e8e"/><rect x="179.6" y="445.5" width="2.2" height="0.9" rx="0.45" fill="#8e8e8e"/><rect x="197.6" y="445.5" width="2.2" height="0.9" rx="0.45" fill="#8e8e8e"/>
</svg>
<div id="tx" style="position:absolute;left:0;top:0;width:800px;height:448px;will-change:transform;opacity:0.999">
<div class="t" style="left:10.60px;top:1px;font-size:5.3px;color:#1a1a1a;transform:scaleX(0.9399);">History</div>
<div class="t" style="left:7.60px;top:12px;font-size:5.9px;color:#1a1a1a;font-weight:bold;-webkit-text-stroke-width:0.04px;transform:scaleX(0.9445);">File</div>
<div class="t" style="left:30.20px;top:12px;font-size:5.9px;color:#1a1a1a;font-weight:bold;-webkit-text-stroke-width:0.04px;transform:scaleX(0.9596);">View</div>
<div class="t" style="left:56.20px;top:12px;font-size:5.9px;color:#1a1a1a;font-weight:bold;-webkit-text-stroke-width:0.04px;transform:scaleX(0.9323);">Tool</div>
<div class="t" style="left:80.30px;top:12px;font-size:5.9px;color:#1a1a1a;font-weight:bold;-webkit-text-stroke-width:0.04px;transform:scaleX(0.9855);">Help</div>
<div class="t" style="left:6.50px;top:24px;font-size:5.1px;color:#646464;transform:scaleX(1.0381);">1.Datetime</div>
<div class="t" style="left:6.50px;top:35px;font-size:5.1px;color:#646464;transform:scaleX(1.0589);">From</div>
<div class="t" style="left:6.50px;top:50px;font-size:5.1px;color:#646464;transform:scaleX(1.0396);">To</div>
<div class="t" style="left:6.50px;top:66px;font-size:5.1px;color:#646464;transform:scaleX(1.0223);">2.Select Tag</div>
<div class="t" style="left:39.30px;top:35px;font-size:5.1px;color:#646464;transform:scaleX(1.0049);">1/17/2025</div>
<div class="t" style="left:39.30px;top:50px;font-size:5.1px;color:#646464;transform:scaleX(1.0049);">1/17/2025</div>
<div class="t" style="left:83.90px;top:35px;font-size:5.1px;color:#646464;transform:scaleX(1.0395);">12:00 AM</div>
<div class="t" style="left:83.90px;top:50px;font-size:5.1px;color:#646464;transform:scaleX(1.0530);">2:09 PM</div>
<div class="t" style="left:55.60px;top:85px;font-size:5.4px;color:#fff;font-weight:bold;-webkit-text-stroke-width:0.04px;transform:scaleX(1.0412);-webkit-text-stroke:0;">3. Draw</div>
<div class="a" style="left:45.1px;top:101px;width:82px;height:9px;overflow:hidden"><div class="t" style="left:0;top:0px;font-size:5.2px;color:#4e4e4e;-webkit-text-stroke-width:0.25px;transform:scaleX(0.9916)">[TE1951] Nhiệt độ các vùng TE 1951</div></div>
<div class="a" style="left:45.1px;top:112px;width:82px;height:9px;overflow:hidden"><div class="t" style="left:0;top:1px;font-size:5.2px;color:#4e4e4e;-webkit-text-stroke-width:0.25px;transform:scaleX(0.9916)">[TE1952A] Nhiệt độ các vùng TE 1!52</div></div>
<div class="a" style="left:45.1px;top:124px;width:82px;height:9px;overflow:hidden"><div class="t" style="left:0;top:0px;font-size:5.2px;color:#4e4e4e;-webkit-text-stroke-width:0.25px;transform:scaleX(0.9916)">[TE1953A] Nhiệt độ các vùng TE 1!53</div></div>
<div class="a" style="left:45.1px;top:135px;width:82px;height:9px;overflow:hidden"><div class="t" style="left:0;top:0px;font-size:5.2px;color:#4e4e4e;-webkit-text-stroke-width:0.25px;transform:scaleX(0.9916)">[TE1952B] Nhiệt độ các vùng TE 1!52</div></div>
<div class="a" style="left:45.1px;top:146px;width:82px;height:9px;overflow:hidden"><div class="t" style="left:0;top:1px;font-size:5.2px;color:#4e4e4e;-webkit-text-stroke-width:0.25px;transform:scaleX(0.9916)">[TE1953B] Nhiệt độ các vùng TE 1!53</div></div>
<div class="a" style="left:45.1px;top:158px;width:82px;height:9px;overflow:hidden"><div class="t" style="left:0;top:0px;font-size:5.2px;color:#4e4e4e;-webkit-text-stroke-width:0.25px;transform:scaleX(0.9916)">[TE1952C] Nhiệt độ các vùng TE 1!52</div></div>
<div class="a" style="left:45.1px;top:169px;width:82px;height:6px;overflow:hidden"><div class="t" style="left:0;top:0px;font-size:5.2px;color:#4e4e4e;-webkit-text-stroke-width:0.25px;transform:scaleX(0.9916)">[SCRcur] SCR Current</div></div>
<div class="t" style="left:124.60px;top:180px;font-size:5.2px;color:#4e4e4e;">s</div>
<div class="t" style="left:133.80px;top:27px;font-size:5.0px;color:#828799;transform:scaleX(1.1089);">Temp [°C]</div>
<div class="t" style="left:467.80px;top:27px;font-size:5.0px;color:#828799;transform:scaleX(1.0676);">Other []</div>
<div class="t" style="left:133.80px;top:215px;font-size:5.0px;color:#fff;font-weight:bold;-webkit-text-stroke-width:0.04px;transform:scaleX(1.0308);">Current [A]</div>
<div class="t" style="left:148.00px;top:190px;font-size:5.2px;color:#555;font-weight:bold;-webkit-text-stroke-width:0.04px;transform:scaleX(1.0373);">0</div>
<div class="t" style="left:142.00px;top:157px;font-size:5.2px;color:#555;font-weight:bold;-webkit-text-stroke-width:0.04px;transform:scaleX(1.0373);">200</div>
<div class="t" style="left:142.00px;top:124px;font-size:5.2px;color:#555;font-weight:bold;-webkit-text-stroke-width:0.04px;transform:scaleX(1.0373);">400</div>
<div class="t" style="left:142.00px;top:90px;font-size:5.2px;color:#555;font-weight:bold;-webkit-text-stroke-width:0.04px;transform:scaleX(1.0373);">600</div>
<div class="t" style="left:142.00px;top:57px;font-size:5.2px;color:#555;font-weight:bold;-webkit-text-stroke-width:0.04px;transform:scaleX(1.0373);">800</div>
<div class="t" style="left:153.10px;top:197px;font-size:5.0px;color:#5c5c5c;font-weight:bold;-webkit-text-stroke-width:0.04px;transform:scaleX(1.0192);">13:10:00</div>
<div class="t" style="left:149.30px;top:203px;font-size:5.0px;color:#5c5c5c;font-weight:bold;-webkit-text-stroke-width:0.04px;transform:scaleX(1.1189);">17/01/2025</div>
<div class="t" style="left:202.70px;top:197px;font-size:5.0px;color:#5c5c5c;font-weight:bold;-webkit-text-stroke-width:0.04px;transform:scaleX(1.0192);">13:20:00</div>
<div class="t" style="left:198.90px;top:203px;font-size:5.0px;color:#5c5c5c;font-weight:bold;-webkit-text-stroke-width:0.04px;transform:scaleX(1.1189);">17/01/2025</div>
<div class="t" style="left:252.30px;top:197px;font-size:5.0px;color:#5c5c5c;font-weight:bold;-webkit-text-stroke-width:0.04px;transform:scaleX(1.0192);">13:30:00</div>
<div class="t" style="left:248.50px;top:203px;font-size:5.0px;color:#5c5c5c;font-weight:bold;-webkit-text-stroke-width:0.04px;transform:scaleX(1.1189);">17/01/2025</div>
<div class="t" style="left:301.90px;top:197px;font-size:5.0px;color:#5c5c5c;font-weight:bold;-webkit-text-stroke-width:0.04px;transform:scaleX(1.0192);">13:40:00</div>
<div class="t" style="left:298.10px;top:203px;font-size:5.0px;color:#5c5c5c;font-weight:bold;-webkit-text-stroke-width:0.04px;transform:scaleX(1.1189);">17/01/2025</div>
<div class="t" style="left:351.50px;top:197px;font-size:5.0px;color:#5c5c5c;font-weight:bold;-webkit-text-stroke-width:0.04px;transform:scaleX(1.0192);">13:50:00</div>
<div class="t" style="left:347.70px;top:203px;font-size:5.0px;color:#5c5c5c;font-weight:bold;-webkit-text-stroke-width:0.04px;transform:scaleX(1.1189);">17/01/2025</div>
<div class="t" style="left:401.10px;top:197px;font-size:5.0px;color:#5c5c5c;font-weight:bold;-webkit-text-stroke-width:0.04px;transform:scaleX(1.0192);">14:00:00</div>
<div class="t" style="left:397.30px;top:203px;font-size:5.0px;color:#5c5c5c;font-weight:bold;-webkit-text-stroke-width:0.04px;transform:scaleX(1.1189);">17/01/2025</div>
<div class="t v" style="left:138.4px;top:122.2px;font-size:4.9px;color:#555;-webkit-text-stroke-width:0.15px;">Temp [°C]</div>
<div class="t" style="left:483.20px;top:45px;font-size:5.2px;color:#555;font-weight:bold;-webkit-text-stroke-width:0.04px;transform:scaleX(1.0373);">0</div>
<div class="t" style="left:477.60px;top:73px;font-size:5.2px;color:#555;font-weight:bold;-webkit-text-stroke-width:0.04px;transform:scaleX(1.1442);">-50</div>
<div class="t" style="left:474.60px;top:101px;font-size:5.2px;color:#555;font-weight:bold;-webkit-text-stroke-width:0.04px;transform:scaleX(1.1145);">-100</div>
<div class="t" style="left:474.60px;top:129px;font-size:5.2px;color:#555;font-weight:bold;-webkit-text-stroke-width:0.04px;transform:scaleX(1.1145);">-150</div>
<div class="t" style="left:474.60px;top:158px;font-size:5.2px;color:#555;font-weight:bold;-webkit-text-stroke-width:0.04px;transform:scaleX(1.1145);">-200</div>
<div class="t" style="left:474.60px;top:186px;font-size:5.2px;color:#555;font-weight:bold;-webkit-text-stroke-width:0.04px;transform:scaleX(1.1145);">-250</div>
<div class="t" style="left:528.40px;top:197px;font-size:5.0px;color:#5c5c5c;font-weight:bold;-webkit-text-stroke-width:0.04px;transform:scaleX(1.0192);">13:20:00</div>
<div class="t" style="left:524.60px;top:203px;font-size:5.0px;color:#5c5c5c;font-weight:bold;-webkit-text-stroke-width:0.04px;transform:scaleX(1.1189);">17/01/2025</div>
<div class="t" style="left:577.50px;top:197px;font-size:5.0px;color:#5c5c5c;font-weight:bold;-webkit-text-stroke-width:0.04px;transform:scaleX(1.0192);">13:30:00</div>
<div class="t" style="left:573.70px;top:203px;font-size:5.0px;color:#5c5c5c;font-weight:bold;-webkit-text-stroke-width:0.04px;transform:scaleX(1.1189);">17/01/2025</div>
<div class="t" style="left:626.60px;top:197px;font-size:5.0px;color:#5c5c5c;font-weight:bold;-webkit-text-stroke-width:0.04px;transform:scaleX(1.0192);">13:40:00</div>
<div class="t" style="left:622.80px;top:203px;font-size:5.0px;color:#5c5c5c;font-weight:bold;-webkit-text-stroke-width:0.04px;transform:scaleX(1.1189);">17/01/2025</div>
<div class="t" style="left:675.70px;top:197px;font-size:5.0px;color:#5c5c5c;font-weight:bold;-webkit-text-stroke-width:0.04px;transform:scaleX(1.0192);">13:50:00</div>
<div class="t" style="left:671.90px;top:203px;font-size:5.0px;color:#5c5c5c;font-weight:bold;-webkit-text-stroke-width:0.04px;transform:scaleX(1.1189);">17/01/2025</div>
<div class="t" style="left:724.80px;top:197px;font-size:5.0px;color:#5c5c5c;font-weight:bold;-webkit-text-stroke-width:0.04px;transform:scaleX(1.0192);">14:00:00</div>
<div class="t" style="left:721.00px;top:203px;font-size:5.0px;color:#5c5c5c;font-weight:bold;-webkit-text-stroke-width:0.04px;transform:scaleX(1.1189);">17/01/2025</div>
<div class="t v" style="left:472.0px;top:122.0px;font-size:4.9px;color:#555;-webkit-text-stroke-width:0.15px;">Other []</div>
<div class="t" style="left:148.00px;top:345px;font-size:5.2px;color:#555;font-weight:bold;-webkit-text-stroke-width:0.04px;transform:scaleX(1.0373);">0</div>
<div class="t" style="left:142.00px;top:307px;font-size:5.2px;color:#555;font-weight:bold;-webkit-text-stroke-width:0.04px;transform:scaleX(1.0373);">100</div>
<div class="t" style="left:142.00px;top:270px;font-size:5.2px;color:#555;font-weight:bold;-webkit-text-stroke-width:0.04px;transform:scaleX(1.0373);">200</div>
<div class="t" style="left:156.60px;top:386px;font-size:5.0px;color:#5c5c5c;font-weight:bold;-webkit-text-stroke-width:0.04px;transform:scaleX(1.0192);">13:32:30</div>
<div class="t" style="left:152.80px;top:392px;font-size:5.0px;color:#5c5c5c;font-weight:bold;-webkit-text-stroke-width:0.04px;transform:scaleX(1.1189);">17/01/2025</div>
<div class="t" style="left:189.28px;top:386px;font-size:5.0px;color:#5c5c5c;font-weight:bold;-webkit-text-stroke-width:0.04px;transform:scaleX(1.0192);">13:33:00</div>
<div class="t" style="left:185.48px;top:392px;font-size:5.0px;color:#5c5c5c;font-weight:bold;-webkit-text-stroke-width:0.04px;transform:scaleX(1.1189);">17/01/2025</div>
<div class="t" style="left:221.96px;top:386px;font-size:5.0px;color:#5c5c5c;font-weight:bold;-webkit-text-stroke-width:0.04px;transform:scaleX(1.0192);">13:33:30</div>
<div class="t" style="left:218.16px;top:392px;font-size:5.0px;color:#5c5c5c;font-weight:bold;-webkit-text-stroke-width:0.04px;transform:scaleX(1.1189);">17/01/2025</div>
<div class="t" style="left:254.64px;top:386px;font-size:5.0px;color:#5c5c5c;font-weight:bold;-webkit-text-stroke-width:0.04px;transform:scaleX(1.0192);">13:34:00</div>
<div class="t" style="left:250.84px;top:392px;font-size:5.0px;color:#5c5c5c;font-weight:bold;-webkit-text-stroke-width:0.04px;transform:scaleX(1.1189);">17/01/2025</div>
<div class="t" style="left:287.32px;top:386px;font-size:5.0px;color:#5c5c5c;font-weight:bold;-webkit-text-stroke-width:0.04px;transform:scaleX(1.0192);">13:34:30</div>
<div class="t" style="left:283.52px;top:392px;font-size:5.0px;color:#5c5c5c;font-weight:bold;-webkit-text-stroke-width:0.04px;transform:scaleX(1.1189);">17/01/2025</div>
<div class="t" style="left:320.00px;top:386px;font-size:5.0px;color:#5c5c5c;font-weight:bold;-webkit-text-stroke-width:0.04px;transform:scaleX(1.0192);">13:35:00</div>
<div class="t" style="left:316.20px;top:392px;font-size:5.0px;color:#5c5c5c;font-weight:bold;-webkit-text-stroke-width:0.04px;transform:scaleX(1.1189);">17/01/2025</div>
<div class="t" style="left:352.68px;top:386px;font-size:5.0px;color:#5c5c5c;font-weight:bold;-webkit-text-stroke-width:0.04px;transform:scaleX(1.0192);">13:35:30</div>
<div class="t" style="left:348.88px;top:392px;font-size:5.0px;color:#5c5c5c;font-weight:bold;-webkit-text-stroke-width:0.04px;transform:scaleX(1.1189);">17/01/2025</div>
<div class="t" style="left:385.36px;top:386px;font-size:5.0px;color:#5c5c5c;font-weight:bold;-webkit-text-stroke-width:0.04px;transform:scaleX(1.0192);">13:36:00</div>
<div class="t" style="left:381.56px;top:392px;font-size:5.0px;color:#5c5c5c;font-weight:bold;-webkit-text-stroke-width:0.04px;transform:scaleX(1.1189);">17/01/2025</div>
<div class="t" style="left:418.04px;top:386px;font-size:5.0px;color:#5c5c5c;font-weight:bold;-webkit-text-stroke-width:0.04px;transform:scaleX(1.0192);">13:36:30</div>
<div class="t" style="left:414.24px;top:392px;font-size:5.0px;color:#5c5c5c;font-weight:bold;-webkit-text-stroke-width:0.04px;transform:scaleX(1.1189);">17/01/2025</div>
<div class="t" style="left:450.72px;top:386px;font-size:5.0px;color:#5c5c5c;font-weight:bold;-webkit-text-stroke-width:0.04px;transform:scaleX(1.0192);">13:37:00</div>
<div class="t" style="left:446.92px;top:392px;font-size:5.0px;color:#5c5c5c;font-weight:bold;-webkit-text-stroke-width:0.04px;transform:scaleX(1.1189);">17/01/2025</div>
<div class="t" style="left:483.40px;top:386px;font-size:5.0px;color:#5c5c5c;font-weight:bold;-webkit-text-stroke-width:0.04px;transform:scaleX(1.0192);">13:37:30</div>
<div class="t" style="left:479.60px;top:392px;font-size:5.0px;color:#5c5c5c;font-weight:bold;-webkit-text-stroke-width:0.04px;transform:scaleX(1.1189);">17/01/2025</div>
<div class="t" style="left:516.08px;top:386px;font-size:5.0px;color:#5c5c5c;font-weight:bold;-webkit-text-stroke-width:0.04px;transform:scaleX(1.0192);">13:38:00</div>
<div class="t" style="left:512.28px;top:392px;font-size:5.0px;color:#5c5c5c;font-weight:bold;-webkit-text-stroke-width:0.04px;transform:scaleX(1.1189);">17/01/2025</div>
<div class="t" style="left:548.76px;top:386px;font-size:5.0px;color:#5c5c5c;font-weight:bold;-webkit-text-stroke-width:0.04px;transform:scaleX(1.0192);">13:38:30</div>
<div class="t" style="left:544.96px;top:392px;font-size:5.0px;color:#5c5c5c;font-weight:bold;-webkit-text-stroke-width:0.04px;transform:scaleX(1.1189);">17/01/2025</div>
<div class="t" style="left:581.44px;top:386px;font-size:5.0px;color:#5c5c5c;font-weight:bold;-webkit-text-stroke-width:0.04px;transform:scaleX(1.0192);">13:39:00</div>
<div class="t" style="left:577.64px;top:392px;font-size:5.0px;color:#5c5c5c;font-weight:bold;-webkit-text-stroke-width:0.04px;transform:scaleX(1.1189);">17/01/2025</div>
<div class="t" style="left:614.12px;top:386px;font-size:5.0px;color:#5c5c5c;font-weight:bold;-webkit-text-stroke-width:0.04px;transform:scaleX(1.0192);">13:39:30</div>
<div class="t" style="left:610.32px;top:392px;font-size:5.0px;color:#5c5c5c;font-weight:bold;-webkit-text-stroke-width:0.04px;transform:scaleX(1.1189);">17/01/2025</div>
<div class="t" style="left:646.80px;top:386px;font-size:5.0px;color:#5c5c5c;font-weight:bold;-webkit-text-stroke-width:0.04px;transform:scaleX(1.0192);">13:40:00</div>
<div class="t" style="left:643.00px;top:392px;font-size:5.0px;color:#5c5c5c;font-weight:bold;-webkit-text-stroke-width:0.04px;transform:scaleX(1.1189);">17/01/2025</div>
<div class="t" style="left:679.48px;top:386px;font-size:5.0px;color:#5c5c5c;font-weight:bold;-webkit-text-stroke-width:0.04px;transform:scaleX(1.0192);">13:40:30</div>
<div class="t" style="left:675.68px;top:392px;font-size:5.0px;color:#5c5c5c;font-weight:bold;-webkit-text-stroke-width:0.04px;transform:scaleX(1.1189);">17/01/2025</div>
<div class="t" style="left:712.16px;top:386px;font-size:5.0px;color:#5c5c5c;font-weight:bold;-webkit-text-stroke-width:0.04px;transform:scaleX(1.0192);">13:41:00</div>
<div class="t" style="left:708.36px;top:392px;font-size:5.0px;color:#5c5c5c;font-weight:bold;-webkit-text-stroke-width:0.04px;transform:scaleX(1.1189);">17/01/2025</div>
<div class="t" style="left:744.84px;top:386px;font-size:5.0px;color:#5c5c5c;font-weight:bold;-webkit-text-stroke-width:0.04px;transform:scaleX(1.0192);">13:41:30</div>
<div class="t" style="left:741.04px;top:392px;font-size:5.0px;color:#5c5c5c;font-weight:bold;-webkit-text-stroke-width:0.04px;transform:scaleX(1.1189);">17/01/2025</div>
<div class="t v" style="left:138.4px;top:311.0px;font-size:4.9px;color:#555;-webkit-text-stroke-width:0.15px;">Current [A]</div>
<div class="t" style="left:359.61px;top:309px;font-size:4.6px;color:#8a8a8a;">84</div>
<div class="t" style="left:366.35px;top:340px;font-size:4.6px;color:#8a8a8a;">0</div>
<div class="t" style="left:380.16px;top:280px;font-size:4.6px;color:#8a8a8a;">162</div>
<div class="t" style="left:4.20px;top:406px;font-size:5.2px;color:#444;transform:scaleX(1.0525);">Home</div>
<div class="t" style="left:33.40px;top:406px;font-size:5.2px;color:#444;transform:scaleX(1.0309);">Alarm</div>
<div class="t" style="left:62.00px;top:406px;font-size:5.2px;color:#444;transform:scaleX(1.0066);">Chart</div>
<div class="t" style="left:8.20px;top:420px;font-size:4.9px;color:#333;transform:scaleX(1.0454);">2025/01/17 14:10:38</div>
<div class="t" style="left:65.80px;top:420px;font-size:4.9px;color:#fff;font-weight:bold;-webkit-text-stroke-width:0.04px;transform:scaleX(0.9850);">DataBase</div>
<div class="t" style="left:109.60px;top:420px;font-size:4.9px;color:#444;transform:scaleX(1.1118);">Load complete! 97 ms</div>
<div class="t" style="left:761.20px;top:418px;font-size:6.3px;color:#1a73d6;font-weight:bold;-webkit-text-stroke-width:0.04px;transform:scaleX(1.4383);-webkit-text-stroke-width:0.25px;">AN PHAT</div>
<div class="t" style="left:39.60px;top:435px;font-size:5.0px;color:#e4e4e4;transform:scaleX(1.0730);-webkit-text-stroke-width:0.08px;">Search</div>
<div class="t" style="left:772.20px;top:432px;font-size:4.8px;color:#f4f4f4;transform:scaleX(1.0069);-webkit-text-stroke-width:0.05px;">2:10 PM</div>
<div class="t" style="left:767.80px;top:439px;font-size:4.8px;color:#f4f4f4;transform:scaleX(1.0490);-webkit-text-stroke-width:0.05px;">1/17/2025</div>
<div class="t" style="left:158.20px;top:433px;font-size:4.4px;color:#f0f3fa;font-weight:bold;-webkit-text-stroke-width:0.04px;transform:scaleX(1.1569);">TIA</div>
<div class="t" style="left:158.00px;top:438px;font-size:4.6px;color:#a9cdf5;font-weight:bold;-webkit-text-stroke-width:0.04px;transform:scaleX(1.0751);">V17</div>
</div>
</div></body></html>
